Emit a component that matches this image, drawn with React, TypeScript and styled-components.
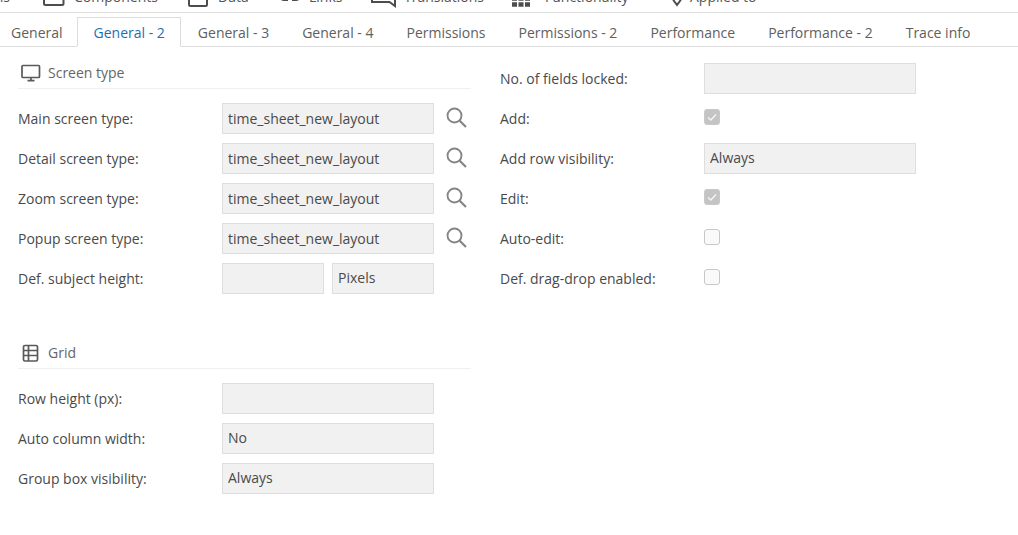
import React, { useId } from "react";
import styled, { createGlobalStyle } from "styled-components";

const Global = createGlobalStyle`
  * { box-sizing: border-box; }
  body { margin: 0; background: #fff; color: #4a4a4a; font: 14px/20px "Open Sans", sans-serif; }
  button, input, select { font: inherit; color: inherit; }
`;

const Toolbar = styled.nav`
  display: flex;
  align-items: flex-end;
  height: 13px;
  overflow: hidden;
  border-bottom: 1px solid #dedede;
  color: #555;
`;
const ToolButton = styled.button<{ $width: number; $end?: boolean }>`
  display: flex;
  flex: none;
  align-items: flex-end;
  justify-content: ${(p) => (p.$end ? "flex-end" : "flex-start")};
  width: ${(p) => p.$width}px;
  height: 24px;
  padding: 0 ${(p) => (p.$end ? 33 : 0)}px 0 0;
  border: 0;
  background: none;
  white-space: nowrap;
  svg { flex: none; }
  span { padding-bottom: 5px; }
`;

const Tabs = styled.div`
  display: flex;
  align-items: flex-end;
  height: 34px;
  border-bottom: 1px solid #dcdcdc;
`;
const Tab = styled.button<{ $active?: boolean }>`
  flex: none;
  height: 30px;
  margin-bottom: -1px;
  padding: 2px 15px 0 16px;
  border: 1px solid ${(p) => (p.$active ? "#dcdcdc" : "transparent")};
  border-bottom-color: ${(p) => (p.$active ? "#fff" : "transparent")};
  background: ${(p) => (p.$active ? "#fff" : "none")};
  color: ${(p) => (p.$active ? "#1f6db5" : "#606060")};
  white-space: nowrap;
  &:first-child { padding-left: 10px; padding-right: 13px; }
`;

const Form = styled.main`
  display: flex;
  gap: 29px;
  padding: 11px 18px;
`;
const Column = styled.div`
  flex: 0 1 453px;
  min-width: 0;
`;
const Group = styled.section`
  padding-bottom: 40px;
`;
const Heading = styled.h2`
  display: flex;
  align-items: center;
  gap: 6px;
  height: 31px;
  margin: 0 0 9px;
  padding-left: 2px;
  border-bottom: 1px solid #f0f0f0;
  font-size: 14px;
  font-weight: 400;
  color: #666;
`;
const Row = styled.div`
  display: grid;
  grid-template-columns: 204px minmax(0, 212px) 37px;
  align-items: center;
  height: 40px;
  padding-top: 1px;
  label { line-height: 21px; }
`;
const Fields = styled.div`
  display: flex;
  gap: 8px;
`;
const Field = styled.input`
  width: 100%;
  min-width: 0;
  height: 31px;
  padding: 0 5px 1px;
  border: 1px solid #dedede;
  border-radius: 0;
  background: #f1f1f1;
`;
const Choice = styled(Field).attrs({ as: "select" })`
  appearance: none;
`;
const Tick = styled.input`
  appearance: none;
  display: block;
  width: 16px;
  height: 16px;
  margin: 0;
  border: 1px solid #c8c8c8;
  border-radius: 3px;
  background: #fafafa;
  &:checked { background: #c4c4c4; }
`;
const TickBox = styled.div`
  display: grid;
  justify-items: start;
  padding-bottom: 3px;
  > * { grid-area: 1 / 1; }
  svg { pointer-events: none; }
`;
const Lookup = styled.button`
  justify-self: start;
  margin-left: 12px;
  padding: 0 0 1px;
  border: 0;
  background: none;
  line-height: 0;
`;

const Search = () => (
  <svg width="22" height="22" viewBox="0 0 22 22" fill="none" stroke="#858585">
    <circle cx="8.500" cy="8.500" r="7" strokeWidth="1.900" />
    <path d="M13.500 13.500L20 20" strokeWidth="2.200" />
  </svg>
);

function TextRow({ label, value = "", lookup }: { label: string; value?: string; lookup?: boolean }) {
  const id = useId();
  return (
    <Row>
      <label htmlFor={id}>{label}:</label>
      <Field id={id} defaultValue={value} readOnly />
      {lookup && <Lookup aria-label={`Look up ${label}`}><Search /></Lookup>}
    </Row>
  );
}

function ChoiceRow({ label, value }: { label: string; value: string }) {
  const id = useId();
  return (
    <Row>
      <label htmlFor={id}>{label}:</label>
      <Choice id={id}><option>{value}</option></Choice>
    </Row>
  );
}

function TickRow({ label, checked }: { label: string; checked?: boolean }) {
  const id = useId();
  return (
    <Row>
      <label htmlFor={id}>{label}:</label>
      <TickBox>
        <Tick id={id} type="checkbox" checked={!!checked} readOnly />
        {checked && (
          <svg width="16" height="16" viewBox="0 0 16 16" fill="none" stroke="#f4f4f4" strokeWidth="1.400">
            <path d="M4 8.500L6.800 11L12 5.500" />
          </svg>
        )}
      </TickBox>
    </Row>
  );
}

const tools: { name: string; width: number; iconWidth?: number; icon?: React.ReactNode }[] = [
  { name: "Screens", width: 43 },
  { name: "Components", width: 145, iconWidth: 31, icon: <rect x="1" y="1" width="19.500" height="16" rx="1.500" /> },
  { name: "Data", width: 91, iconWidth: 30, icon: <rect x="1" y="1" width="18" height="17" rx="1.500" /> },
  { name: "Links", width: 92, iconWidth: 30, icon: <path d="M9 12H5a4 4 0 0 1 0-8h4M13 12h4a4 4 0 0 0 0-8h-4" /> },
  { name: "Translations", width: 141, iconWidth: 33, icon: <path d="M1 1V14H18.500L24 18V1Z" /> },
  { name: "Functionality", width: 159, iconWidth: 33, icon: <path d="M0 10.500h18M0 16.500h18" strokeWidth="4.500" strokeDasharray="5 1.500" /> },
  { name: "Applied to", width: 100, iconWidth: 19, icon: <path d="M1 8c0 3 2 5 5 9c3-4 5-6 5-9" /> },
];
const tabs = ["General", "General - 2", "General - 3", "General - 4", "Permissions", "Permissions - 2", "Performance", "Performance - 2", "Trace info"];

export default function App() {
  const heightId = useId();
  return (
    <>
      <Global />
      <Toolbar>
        {tools.map((t) => (
          <ToolButton key={t.name} $width={t.width} $end={!t.icon}>
            {t.icon && (
              <svg width={t.iconWidth} height="24" viewBox={`0 0 ${t.iconWidth} 24`} fill="none" stroke="#4d4d4d" strokeWidth="2">
                {t.icon}
              </svg>
            )}
            <span>{t.name}</span>
          </ToolButton>
        ))}
      </Toolbar>
      <Tabs role="tablist">
        {tabs.map((t, i) => <Tab key={t} role="tab" aria-selected={i === 1} $active={i === 1}>{t}</Tab>)}
      </Tabs>
      <Form>
        <Column>
          <Group>
            <Heading>
              <svg width="22" height="18" viewBox="0 0 22 18" fill="none" stroke="#5a5a5a" strokeWidth="1.700">
                <rect x="2" y="1.500" width="17.500" height="12" rx="1" />
                <path d="M11 13.500v3M7.500 16.700h7" />
              </svg>
              Screen type
            </Heading>
            <TextRow label="Main screen type" value="time_sheet_new_layout" lookup />
            <TextRow label="Detail screen type" value="time_sheet_new_layout" lookup />
            <TextRow label="Zoom screen type" value="time_sheet_new_layout" lookup />
            <TextRow label="Popup screen type" value="time_sheet_new_layout" lookup />
            <Row>
              <label htmlFor={heightId}>Def. subject height:</label>
              <Fields>
                <Field id={heightId} readOnly />
                <Choice aria-label="Height unit"><option>Pixels</option></Choice>
              </Fields>
            </Row>
          </Group>
          <Group>
            <Heading>
              <svg width="22" height="18" viewBox="0 0 22 18" fill="none" stroke="#5a5a5a" strokeWidth="1.700">
                <rect x="3.500" y="1.500" width="14" height="15.500" rx="1.500" />
                <path d="M8.500 1.500v15.500M3.500 6.500h14M3.500 11.500h14" />
              </svg>
              Grid
            </Heading>
            <TextRow label="Row height (px)" />
            <ChoiceRow label="Auto column width" value="No" />
            <ChoiceRow label="Group box visibility" value="Always" />
          </Group>
        </Column>
        <Column>
          <TextRow label="No. of fields locked" />
          <TickRow label="Add" checked />
          <ChoiceRow label="Add row visibility" value="Always" />
          <TickRow label="Edit" checked />
          <TickRow label="Auto-edit" />
          <TickRow label="Def. drag-drop enabled" />
        </Column>
      </Form>
    </>
  );
}
